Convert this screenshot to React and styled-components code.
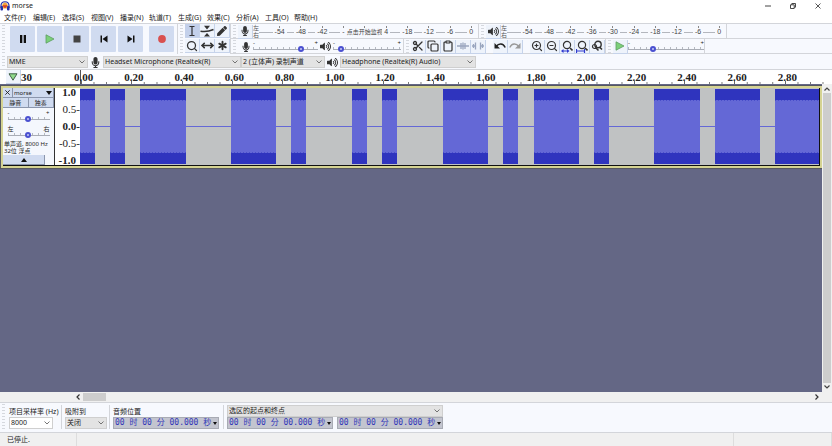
import styled, { createGlobalStyle } from "styled-components";
import { Scissors, Copy, Clipboard, Search, ZoomIn, ZoomOut, MoveHorizontal, Asterisk } from "lucide-react";
import { FaMicrophone, FaVolumeUp, FaPen } from "react-icons/fa";

const COLORS = {
  bar: "#f7f9fe",
  button: "#d0dbf0",
  select: "#e3e3e3",
  line: "#d3d5da",
  text: "#222222",
  blue: "#4a50d0",
  waveDark: "#2f34be",
  waveLight: "#6468d6",
  canvas: "#646785",
};

const MENUS = [
  "文件(F)",
  "编辑(E)",
  "选择(S)",
  "视图(V)",
  "播录(N)",
  "轨道(T)",
  "生成(G)",
  "效果(C)",
  "分析(A)",
  "工具(O)",
  "帮助(H)",
];

const LEVELS = ["-54", "-48", "-42", "-36", "-30", "-24", "-18", "-12", "-6", "0"];

// the monitoring hint takes the room of the middle marks
const RECORD_LEVELS = ["-54", "-48", "-42", "-", "点击开始监视", "4", "-18", "-12", "-6", "0"];

const TIMES = Array.from({ length: 15 }, (_, i) => (i * 0.2).toFixed(2));

// [start, width] of every tone in the clip
const TONES = [
  [0, 15],
  [30, 15],
  [60, 46],
  [151, 45],
  [211, 15],
  [272, 15],
  [302, 15],
  [363, 45],
  [423, 15],
  [454, 45],
  [514, 15],
  [574, 46],
  [635, 45],
  [695, 44],
];

function Chevron() {
  return (
    <svg width="6" height="4" viewBox="0 0 6 4">
      <path d="M0.5 0.5L3 3L5.5 0.5" fill="none" stroke="#666" strokeWidth="0.9" />
    </svg>
  );
}

function Dropdown({ label, value, ...props }) {
  return (
    <SelectBox {...props}>
      <select aria-label={label} defaultValue={value}>
        <option>{value}</option>
      </select>
      <Chevron />
    </SelectBox>
  );
}

function Slider({ label, value, left = "-", right = "+", ...props }) {
  return (
    <SliderBox {...props}>
      <span>{left}</span>
      <span>{right}</span>
      <input type="range" aria-label={label} defaultValue={value} />
    </SliderBox>
  );
}

function Meter({ levels = LEVELS }) {
  return (
    <MeterBox>
      {levels.map((level) => (
        <MeterMark key={level} $hint={level.length > 3}>
          <em>{level}</em>
        </MeterMark>
      ))}
    </MeterBox>
  );
}

function TimeField({ label, id }) {
  return (
    <TimeBox>
      <input id={id} aria-label={label} defaultValue="00 时 00 分 00.000 秒" />
      <svg width="4" height="3" viewBox="0 0 4 3">
        <path d="M0 0H4L2 3Z" fill="#111" />
      </svg>
    </TimeBox>
  );
}

function Logo() {
  return (
    <svg width="10" height="10" viewBox="0 0 20 20">
      <path d="M4 12C4 6 7 3 10 3S16 6 16 12V15H4Z" fill="#f2a33a" />
      <path d="M6 12L8 8L10 14L12 8L14 12" fill="none" stroke="#d8402a" strokeWidth="2" />
      <path d="M2 14V10C2 5 5 1.500 10 1.500S18 5 18 10V14" fill="none" stroke="#2430a8" strokeWidth="2.400" />
      <rect x="1" y="10" width="5" height="9" rx="2" fill="#2430a8" />
      <rect x="14" y="10" width="5" height="9" rx="2" fill="#2430a8" />
    </svg>
  );
}

function Transport() {
  return (
    <TransportBar>
      <Grip />
      <BigButton aria-label="暂停">
        <svg width="8" height="8" viewBox="0 0 8 8">
          <path d="M1 0H3.300V8H1ZM4.700 0H7V8H4.700Z" fill="#111" />
        </svg>
      </BigButton>
      <BigButton aria-label="播放">
        <svg width="10" height="10" viewBox="0 0 10 10">
          <path d="M1 0.800L9 5L1 9.200Z" fill="#7cd07a" stroke="#5d9d62" strokeWidth="0.8" />
        </svg>
      </BigButton>
      <BigButton aria-label="停止">
        <svg width="8" height="8" viewBox="0 0 8 8">
          <rect x="0.500" y="0.500" width="7" height="7" fill="#444" />
        </svg>
      </BigButton>
      <BigButton aria-label="跳至开头">
        <svg width="8" height="8" viewBox="0 0 8 8">
          <path d="M0.500 0.500H2V7.500H0.500ZM7.500 0.500V7.500L2.500 4Z" fill="#111" />
        </svg>
      </BigButton>
      <BigButton aria-label="跳至末尾">
        <svg width="8" height="8" viewBox="0 0 8 8">
          <path d="M7.500 0.500H6V7.500H7.500ZM0.500 0.500V7.500L5.500 4Z" fill="#111" />
        </svg>
      </BigButton>
      <BigButton aria-label="录制" $apart>
        <svg width="8" height="8" viewBox="0 0 8 8">
          <circle cx="4" cy="4" r="3.900" fill="#d9504f" />
        </svg>
      </BigButton>
    </TransportBar>
  );
}

function Tools() {
  return (
    <ToolsBar>
      <Grip />
      <ToolGrid>
        <Tool aria-label="选择工具" $active>
          <svg width="8" height="10" viewBox="0 0 8 10">
            <path d="M1.500 0.500H6.500M1.500 9.500H6.500M4 0.500V9.500" stroke="#333" strokeWidth="1.200" />
          </svg>
        </Tool>
        <Tool aria-label="包络工具">
          <svg width="14" height="12" viewBox="0 0 14 12">
            <path d="M0.500 6.200C5 7 9 6.500 13.500 4.500" fill="none" stroke="#333" strokeWidth="1.600" />
            <path d="M4 0.800H10L7 4.500ZM4 11.500H10L7 8Z" fill="#333" />
          </svg>
        </Tool>
        <Tool aria-label="绘制工具">
          <FaPen size={10} />
        </Tool>
        <Tool aria-label="缩放工具">
          <Search size={12} strokeWidth={2.5} />
        </Tool>
        <Tool aria-label="时间移动工具">
          <MoveHorizontal size={13} strokeWidth={3} />
        </Tool>
        <Tool aria-label="多功能工具">
          <Asterisk size={15} strokeWidth={3} />
        </Tool>
      </ToolGrid>
    </ToolsBar>
  );
}

function EditTools() {
  return (
    <Bar>
      <Grip />
      <Tool aria-label="剪切">
        <Scissors size={12} strokeWidth={2.6} />
      </Tool>
      <Tool aria-label="复制">
        <Copy size={12} strokeWidth={2.4} />
      </Tool>
      <Tool aria-label="粘贴">
        <Clipboard size={12} strokeWidth={2.4} />
      </Tool>
      <Tool aria-label="修剪">
        <svg width="12" height="8" viewBox="0 0 12 8">
          <path d="M0 4H12M4 1V7M6 0.500V7.500M8 1V7" stroke="#9aa6bf" strokeWidth="1.300" />
        </svg>
      </Tool>
      <Tool aria-label="静音选区">
        <svg width="12" height="8" viewBox="0 0 12 8">
          <path d="M1.500 2V6M3.500 0.500V7.500M8.500 0.500V7.500M10.500 2V6M0 4H3.500M8.500 4H12" stroke="#9aa6bf" strokeWidth="1.300" />
        </svg>
      </Tool>
      <Space />
      <Tool aria-label="撤销">
        <svg width="12" height="8" viewBox="0 0 12 8">
          <path d="M2 4.500C5 1 9 1 11.200 5.500" fill="none" stroke="#222" strokeWidth="1.500" />
          <path d="M0.500 1V6.500H6Z" fill="#222" />
        </svg>
      </Tool>
      <Tool aria-label="重做">
        <svg width="12" height="8" viewBox="0 0 12 8">
          <path d="M10 4.500C7 1 3 1 0.800 5.500" fill="none" stroke="#999" strokeWidth="1.300" />
          <path d="M11.500 1V6.500H6Z" fill="#999" />
        </svg>
      </Tool>
      <Space />
      <Tool aria-label="放大">
        <ZoomIn size={12} strokeWidth={2.4} />
      </Tool>
      <Tool aria-label="缩小">
        <ZoomOut size={12} strokeWidth={2.4} />
      </Tool>
      <Tool aria-label="缩放至选区">
        <svg width="12" height="13" viewBox="0 0 12 13">
          <path d="M9 8L11.500 10.500" stroke="#333" strokeWidth="1.600" />
          <circle cx="6" cy="5" r="3.600" fill="none" stroke="#333" strokeWidth="1.200" />
          <path d="M0 11L2.500 9V13ZM8.500 11L6 9V13ZM2 10.500H6V11.500H2Z" fill="#2f3ad0" />
        </svg>
      </Tool>
      <Tool aria-label="缩放至项目">
        <svg width="12" height="13" viewBox="0 0 12 13">
          <path d="M9 8L11.500 10.500" stroke="#333" strokeWidth="1.600" />
          <circle cx="6" cy="5" r="3.600" fill="none" stroke="#333" strokeWidth="1.200" />
          <path d="M0.500 9V13M8.500 9V13M1 11H8" stroke="#2f3ad0" strokeWidth="1.200" />
        </svg>
      </Tool>
      <Tool aria-label="缩放切换">
        <svg width="12" height="12" viewBox="0 0 12 12">
          <circle cx="7" cy="4.500" r="3.200" fill="none" stroke="#333" strokeWidth="1.400" />
          <circle cx="3.500" cy="6.500" r="2" fill="none" stroke="#333" strokeWidth="1.200" />
          <path d="M5 8L7.500 10.500M8.500 7L11 9.500" stroke="#333" strokeWidth="1.600" />
        </svg>
      </Tool>
    </Bar>
  );
}

function Waveform() {
  return (
    <Wave viewBox="0 0 739 77" preserveAspectRatio="none">
      <rect width="739" height="77" fill="#c0c2c3" />
      <path d="M0 38.500H739" stroke={COLORS.waveLight} strokeWidth="1" />
      {TONES.map(([x, width]) => (
        <g key={x}>
          <rect x={x} y="1" width={width} height="75" fill={COLORS.waveDark} />
          <rect x={x} y="12" width={width} height="53" fill={COLORS.waveLight} />
          <path
            d={`M${x} 12H${x + width}M${x} 65H${x + width}`}
            stroke={COLORS.waveDark}
            strokeWidth="1"
            strokeDasharray="1 2"
          />
        </g>
      ))}
    </Wave>
  );
}

function Track() {
  return (
    <TrackBox>
      <Panel>
        <PanelRow>
          <PanelButton $w="10px" aria-label="关闭">
            <svg width="5" height="5" viewBox="0 0 5 5">
              <path d="M0.300 0.300L4.700 4.700M4.700 0.300L0.300 4.700" stroke="#222" strokeWidth="0.9" />
            </svg>
          </PanelButton>
          <PanelButton $spread>
            morse
            <svg width="6" height="4" viewBox="0 0 6 4">
              <path d="M0 0H6L3 4Z" fill="#111" />
            </svg>
          </PanelButton>
        </PanelRow>
        <PanelRow>
          <PanelButton>静音</PanelButton>
          <PanelButton>独奏</PanelButton>
        </PanelRow>
        <PanelSliders>
          <Slider label="增益" value={48} $w="42px" />
          <Slider label="声像" value={48} $w="42px" left="左" right="右" />
        </PanelSliders>
        <PanelInfo>
          单声道, 8000 Hz
          <br />
          32位 浮点
        </PanelInfo>
        <PanelButton $w="42px" aria-label="折叠">
          <svg width="6" height="4" viewBox="0 0 6 4">
            <path d="M0 4H6L3 0Z" fill="#111" />
          </svg>
        </PanelButton>
      </Panel>
      <Axis>
        <b>1.0</b>
        <span>0.5-</span>
        <b>0.0-</b>
        <span>-0.5-</span>
        <b>-1.0</b>
      </Axis>
      <Waveform />
    </TrackBox>
  );
}

export default function App() {
  return (
    <Window>
      <GlobalStyle />
      <TitleBar>
        <Logo />
        <h1>morse</h1>
        <WindowButton aria-label="最小化">
          <svg width="6" height="6" viewBox="0 0 6 6">
            <path d="M0 3H6" stroke="#444" />
          </svg>
        </WindowButton>
        <WindowButton aria-label="还原">
          <svg width="6" height="6" viewBox="0 0 6 6">
            <path d="M0.500 1.800H4.200V5.500H0.500ZM1.800 1.800V0.500H5.500V4.200H4.200" fill="none" stroke="#333" strokeWidth="0.9" />
          </svg>
        </WindowButton>
        <WindowButton aria-label="关闭窗口">
          <svg width="6" height="6" viewBox="0 0 6 6">
            <path d="M0.500 0.500L5.500 5.500M5.500 0.500L0.500 5.500" stroke="#444" strokeWidth="0.9" />
          </svg>
        </WindowButton>
      </TitleBar>
      <MenuBar>
        {MENUS.map((menu) => (
          <button key={menu}>{menu}</button>
        ))}
      </MenuBar>

      <Toolbars>
        <Transport />
        <Tools />
        <ToolRows>
          <ToolRow>
            <Bar $w="248px">
              <Grip />
              <Tool aria-label="录制电平">
                <FaMicrophone size={10} />
              </Tool>
              <Channels>
                <span>左</span>
                <span>右</span>
              </Channels>
              <Meter levels={RECORD_LEVELS} />
            </Bar>
            <Bar $w="248px">
              <Grip />
              <Tool aria-label="播放电平">
                <FaVolumeUp size={11} />
              </Tool>
              <Channels>
                <span>左</span>
                <span>右</span>
              </Channels>
              <Meter />
            </Bar>
          </ToolRow>
          <ToolRow>
            <Bar $w="173px">
              <Grip />
              <Icon>
                <FaMicrophone size={10} />
              </Icon>
              <Slider label="录制音量" value={76} $w="65px" />
              <Icon>
                <FaVolumeUp size={11} />
              </Icon>
              <Slider label="播放音量" value={8} $w="68px" />
            </Bar>
            <EditTools />
            <Bar>
              <Grip />
              <Tool aria-label="按速度播放">
                <svg width="10" height="10" viewBox="0 0 10 10">
                  <path d="M1 0.800L9 5L1 9.200Z" fill="#7cd07a" stroke="#5d9d62" strokeWidth="0.8" />
                </svg>
              </Tool>
              <Slider label="播放速度" value={31} $w="76px" />
            </Bar>
          </ToolRow>
        </ToolRows>
      </Toolbars>

      <DeviceBar>
        <Grip />
        <Dropdown label="音频主机" value="MME" $w="81px" />
        <Icon>
          <FaMicrophone size={11} />
        </Icon>
        <Dropdown label="录制设备" value="Headset Microphone (Realtek(R)" $w="138px" />
        <Dropdown label="录制声道" value="2 (立体声) 录制声道" $w="84px" />
        <Icon>
          <FaVolumeUp size={11} />
        </Icon>
        <Dropdown label="播放设备" value="Headphone (Realtek(R) Audio)" $w="136px" />
      </DeviceBar>

      <Ruler>
        <RulerHead>
          <Tool aria-label="固定播放头">
            <svg width="10" height="8" viewBox="0 0 10 8">
              <path d="M1 0.800H9L5 7.200Z" fill="#8fd98a" stroke="#3f5f48" />
            </svg>
          </Tool>
          <span>30</span>
        </RulerHead>
        <Timeline>
          {TIMES.map((time) => (
            <span key={time}>{time}</span>
          ))}
        </Timeline>
      </Ruler>

      <Workspace>
        <Canvas>
          <Track />
        </Canvas>
        <VScroll>
          <svg width="6" height="4" viewBox="0 0 6 4">
            <path d="M0.500 3.500L3 1L5.500 3.500" fill="none" stroke="#444" strokeWidth="1.200" />
          </svg>
          <i />
          <svg width="6" height="4" viewBox="0 0 6 4">
            <path d="M0.500 0.500L3 3L5.500 0.500" fill="none" stroke="#444" strokeWidth="1.200" />
          </svg>
        </VScroll>
      </Workspace>
      <HScroll>
        <svg width="4" height="6" viewBox="0 0 4 6">
          <path d="M3.500 0.500L1 3L3.500 5.500" fill="none" stroke="#333" strokeWidth="1.200" />
        </svg>
        <i />
        <svg width="4" height="6" viewBox="0 0 4 6">
          <path d="M0.500 0.500L3 3L0.500 5.500" fill="none" stroke="#333" strokeWidth="1.200" />
        </svg>
      </HScroll>

      <SelectionBar>
        <Grip />
        <Field $w="54px">
          <label htmlFor="rate">项目采样率 (Hz)</label>
          <SelectBox $w="44px" $white>
            <select id="rate" defaultValue="8000">
              <option>8000</option>
            </select>
            <Chevron />
          </SelectBox>
        </Field>
        <Field $w="48px">
          <label htmlFor="snap">吸附到</label>
          <SelectBox $w="42px">
            <select id="snap" defaultValue="关闭">
              <option>关闭</option>
            </select>
            <Chevron />
          </SelectBox>
        </Field>
        <Field $w="114px">
          <label htmlFor="position">音频位置</label>
          <TimeField id="position" />
        </Field>
        <Field>
          <Dropdown label="选区显示" value="选区的起点和终点" $w="216px" />
          <Pair>
            <TimeField label="选区起点" />
            <TimeField label="选区终点" />
          </Pair>
        </Field>
      </SelectionBar>
      <StatusBar>
        <span>已停止.</span>
        <span />
        <span />
      </StatusBar>
    </Window>
  );
}

const GlobalStyle = createGlobalStyle`
  * {
    box-sizing: border-box;
  }

  body {
    margin: 0;
    color: ${COLORS.text};
    font-family: "Noto Sans", "Noto Sans CJK SC", sans-serif;
    font-size: 7px;
    line-height: 10px;
  }

  button, input, select {
    margin: 0;
    padding: 0;
    border: none;
    outline: none;
    border-radius: 0;
    background: none;
    color: inherit;
    font: inherit;
  }

  h1, p {
    margin: 0;
    font: inherit;
  }

  svg {
    display: block;
    flex-shrink: 0;
  }
`;

const Window = styled.div`
  display: flex;
  flex-direction: column;
  min-height: 100vh;
  background: #ffffff;
`;

const TitleBar = styled.header`
  display: flex;
  align-items: center;
  height: 12px;

  h1 {
    flex: 1;
    padding-left: 2px;
  }
`;

const WindowButton = styled.button`
  display: flex;
  align-items: center;
  justify-content: center;
  width: 25px;
  height: 12px;

  &:last-child {
    margin-right: 2px;
  }
`;

const MenuBar = styled.nav`
  display: flex;
  height: 11px;
  padding-left: 4px;

  button {
    width: 29px;
    line-height: 12px;
    text-align: left;
    white-space: nowrap;
  }
`;

const Toolbars = styled.div`
  display: flex;
  height: 32px;
  border-top: 1px solid ${COLORS.line};
  background: ${COLORS.bar};
`;

const Bar = styled.div`
  display: flex;
  align-items: center;
  width: ${(props) => props.$w};
  height: 15px;
  border-right: 1px solid ${COLORS.line};
`;

const TransportBar = styled(Bar)`
  height: 30px;
  padding-right: 3px;
  gap: 2px;

  i {
    margin-right: 3px;
  }
`;

const ToolsBar = styled(Bar)`
  height: 30px;
`;

const ToolRows = styled.div`
  flex: 1;
`;

const ToolRow = styled.div`
  display: flex;
  height: 15px;
  border-bottom: 1px solid ${COLORS.line};
`;

const Grip = styled.i`
  align-self: stretch;
  flex-shrink: 0;
  width: 3px;
  margin: 1px 2px;
  background: repeating-linear-gradient(#d5d8de 0 1px, transparent 1px 3px);
`;

const BigButton = styled.button`
  display: flex;
  align-items: center;
  justify-content: center;
  width: 25px;
  height: 26px;
  margin-left: ${(props) => (props.$apart ? "4px" : 0)};
  background: ${COLORS.button};
  border-radius: 1px;
`;

const ToolGrid = styled.div`
  display: grid;
  grid-template-columns: repeat(3, 15px);
  grid-auto-rows: 15px;
`;

const Tool = styled.button`
  display: flex;
  align-items: center;
  justify-content: center;
  flex-shrink: 0;
  width: 15px;
  height: 14px;
  border-right: 1px solid #c6d3ea;
  border-bottom: 1px solid #c6d3ea;
  background: ${(props) => (props.$active ? "#c3d0ea" : "#eef3fb")};
  color: #333333;
`;

const Icon = styled.span`
  display: flex;
  align-items: center;
  justify-content: center;
  flex-shrink: 0;
  width: 15px;
  color: #333333;
`;

const Space = styled.i`
  width: 7px;
`;

const Channels = styled.div`
  width: 6px;
  font-size: 6px;
  line-height: 7px;
  color: #555555;

  span {
    display: block;
  }
`;

const MeterBox = styled.div`
  display: flex;
  flex: 1;
  height: 14px;
  margin-right: -4px;
  padding-left: 10px;
  background: linear-gradient(90deg, #b3b6bd calc(100% - 12px), transparent 0) 0 7px / 100% 1px no-repeat;
  font-family: "Liberation Sans", "Noto Sans CJK SC", sans-serif;
  font-size: 7px;
  line-height: 8px;
  color: #444444;
`;

const MeterMark = styled.span`
  display: flex;
  align-items: center;
  justify-content: center;
  flex: 1 1 0;
  min-width: 0;
  background: linear-gradient(#888888, #888888) 50% 1px / 1px 2px no-repeat;
  font-size: ${(props) => (props.$hint ? "6px" : "7px")};
  white-space: nowrap;

  em {
    padding: ${(props) => (props.$hint ? 0 : "0 2px")};
    background: ${COLORS.bar};
    font-style: normal;
  }
`;

const SliderBox = styled.div`
  display: grid;
  grid-template-columns: 1fr 1fr;
  flex-shrink: 0;
  width: ${(props) => props.$w};
  padding-bottom: 2px;
  font-size: 6px;
  line-height: 6px;

  span + span {
    text-align: right;
  }

  input {
    grid-column: 1 / 3;
    appearance: none;
    width: 100%;
    height: 6px;
    background:
      linear-gradient(#a9adb6, #a9adb6) 0 3px / 100% 1px no-repeat,
      repeating-linear-gradient(90deg, #b5b9c1 0 1px, transparent 1px 6px) 0 1px / 100% 2px no-repeat;
  }

  input::-webkit-slider-thumb {
    appearance: none;
    width: 6px;
    height: 6px;
    border: 2px solid ${COLORS.blue};
    border-radius: 50%;
    background: #c5c9f5;
  }
`;

const DeviceBar = styled.div`
  display: flex;
  align-items: center;
  height: 14px;
  background: ${COLORS.bar};
`;

const SelectBox = styled.div`
  display: flex;
  align-items: center;
  flex-shrink: 0;
  width: ${(props) => props.$w};
  height: 12px;
  padding: 0 2px 0 1px;
  border: 1px solid #cfcfcf;
  background: ${(props) => (props.$white ? "#ffffff" : COLORS.select)};

  select {
    flex: 1;
    appearance: none;
    min-width: 0;
    height: 10px;
  }
`;

const Ruler = styled.div`
  display: flex;
  height: 15px;
  overflow: hidden;
  border-top: 1px solid ${COLORS.line};
  background: ${COLORS.bar};
  font-family: "Liberation Serif", serif;
  font-size: 11px;
  font-weight: bold;
  line-height: 14px;
`;

const RulerHead = styled.div`
  display: flex;
  flex-shrink: 0;
  width: 80px;
  padding-left: 6px;
  background: #ffffff;
`;

const Timeline = styled.div`
  display: grid;
  grid-template-columns: repeat(15, 1fr);
  flex: 1;
  margin-right: -3px;
  border-left: 1px solid #555555;
  background: #ffffff;

  span {
    min-width: 0;
    text-indent: -7px;
    background:
      linear-gradient(#666666, #666666) 0 100% / 1px 3px no-repeat,
      linear-gradient(90deg, #777777 1px, transparent 1px) 0 100% / 25% 2px repeat-x;
  }
`;

const Workspace = styled.main`
  display: flex;
  flex: 1;
`;

const Canvas = styled.div`
  flex: 1;
  padding: 2px 0 0 1px;
  background: ${COLORS.canvas};
`;

const TrackBox = styled.section`
  display: flex;
  height: 82px;
  border: 2px solid #d5d392;
  outline: 1px solid #55565f;
  background: #111111;
`;

const Panel = styled.div`
  display: flex;
  flex-direction: column;
  width: 52px;
  height: 77px;
  border-right: 1px solid #333333;
  background: #f4f7fd;
  font-size: 6px;
  line-height: 8px;
`;

const PanelRow = styled.div`
  display: flex;
`;

const PanelButton = styled.button`
  display: flex;
  align-items: center;
  justify-content: ${(props) => (props.$spread ? "space-between" : "center")};
  flex: ${(props) => (props.$w ? "none" : 1)};
  width: ${(props) => props.$w};
  height: 10px;
  padding: 0 1px;
  border-right: 1px solid #8b96ad;
  border-bottom: 1px solid #8b96ad;
  background: ${COLORS.button};
`;

const PanelSliders = styled.div`
  display: flex;
  flex-direction: column;
  align-items: center;
  gap: 2px;
  padding-top: 2px;
`;

const PanelInfo = styled.p`
  flex: 1;
  padding: 1px 0 0 1px;
  line-height: 7px;
  white-space: nowrap;
`;

const Axis = styled.div`
  display: flex;
  flex-direction: column;
  justify-content: space-between;
  width: 25px;
  height: 77px;
  background: #ffffff;
  font-family: "Liberation Serif", serif;
  font-size: 11px;
  line-height: 9px;
  text-align: right;

  b:first-child,
  b:last-child {
    padding-right: 4px;
  }
`;

const Wave = styled.svg`
  flex: 1;
  min-width: 0;
  height: 77px;
  margin-right: 1px;
`;

const VScroll = styled.div`
  display: flex;
  flex-direction: column;
  align-items: center;
  justify-content: space-between;
  width: 11px;
  padding: 3px 0;
  background: #f0f0f0;

  i {
    flex: 1;
    width: 8px;
    margin: 2px 0;
    background: #cdcdcd;
  }
`;

const HScroll = styled.div`
  display: flex;
  align-items: center;
  height: 10px;
  padding: 0 13px 0 76px;
  background: #f0f0f0;

  i {
    width: 23px;
    height: 8px;
    margin: 0 auto 0 3px;
    background: #cdcdcd;
  }
`;

const SelectionBar = styled.div`
  display: flex;
  height: 31px;
  border-top: 1px solid ${COLORS.line};
  border-bottom: 1px solid ${COLORS.line};
  background: ${COLORS.bar};
`;

const Field = styled.div`
  display: flex;
  flex-direction: column;
  justify-content: flex-end;
  width: ${(props) => props.$w};
  margin: 2px 0 3px;
  padding-left: 2px;
  white-space: nowrap;

  & + & {
    padding-left: 3px;
    border-left: 1px solid ${COLORS.line};
  }
`;

const Pair = styled.div`
  display: flex;
  gap: 4px;
`;

const TimeBox = styled.div`
  display: flex;
  align-items: center;
  width: 106px;
  height: 12px;
  padding: 0 1px;
  border: 1px solid #a8abb4;
  background: #c3c5cf;

  input {
    flex: 1;
    min-width: 0;
    height: 10px;
    color: #3036b8;
    font-family: "DejaVu Sans Mono", "Noto Sans CJK SC", monospace;
    font-size: 8px;
  }
`;

const StatusBar = styled.footer`
  display: flex;
  height: 13px;
  padding-left: 7px;
  background: #f0f0f0;
  line-height: 13px;

  span {
    width: 70px;
    border-right: 1px solid #dddddd;
  }

  span:nth-child(2) {
    flex: 1;
  }

  span:last-child {
    width: 98px;
  }
`;
